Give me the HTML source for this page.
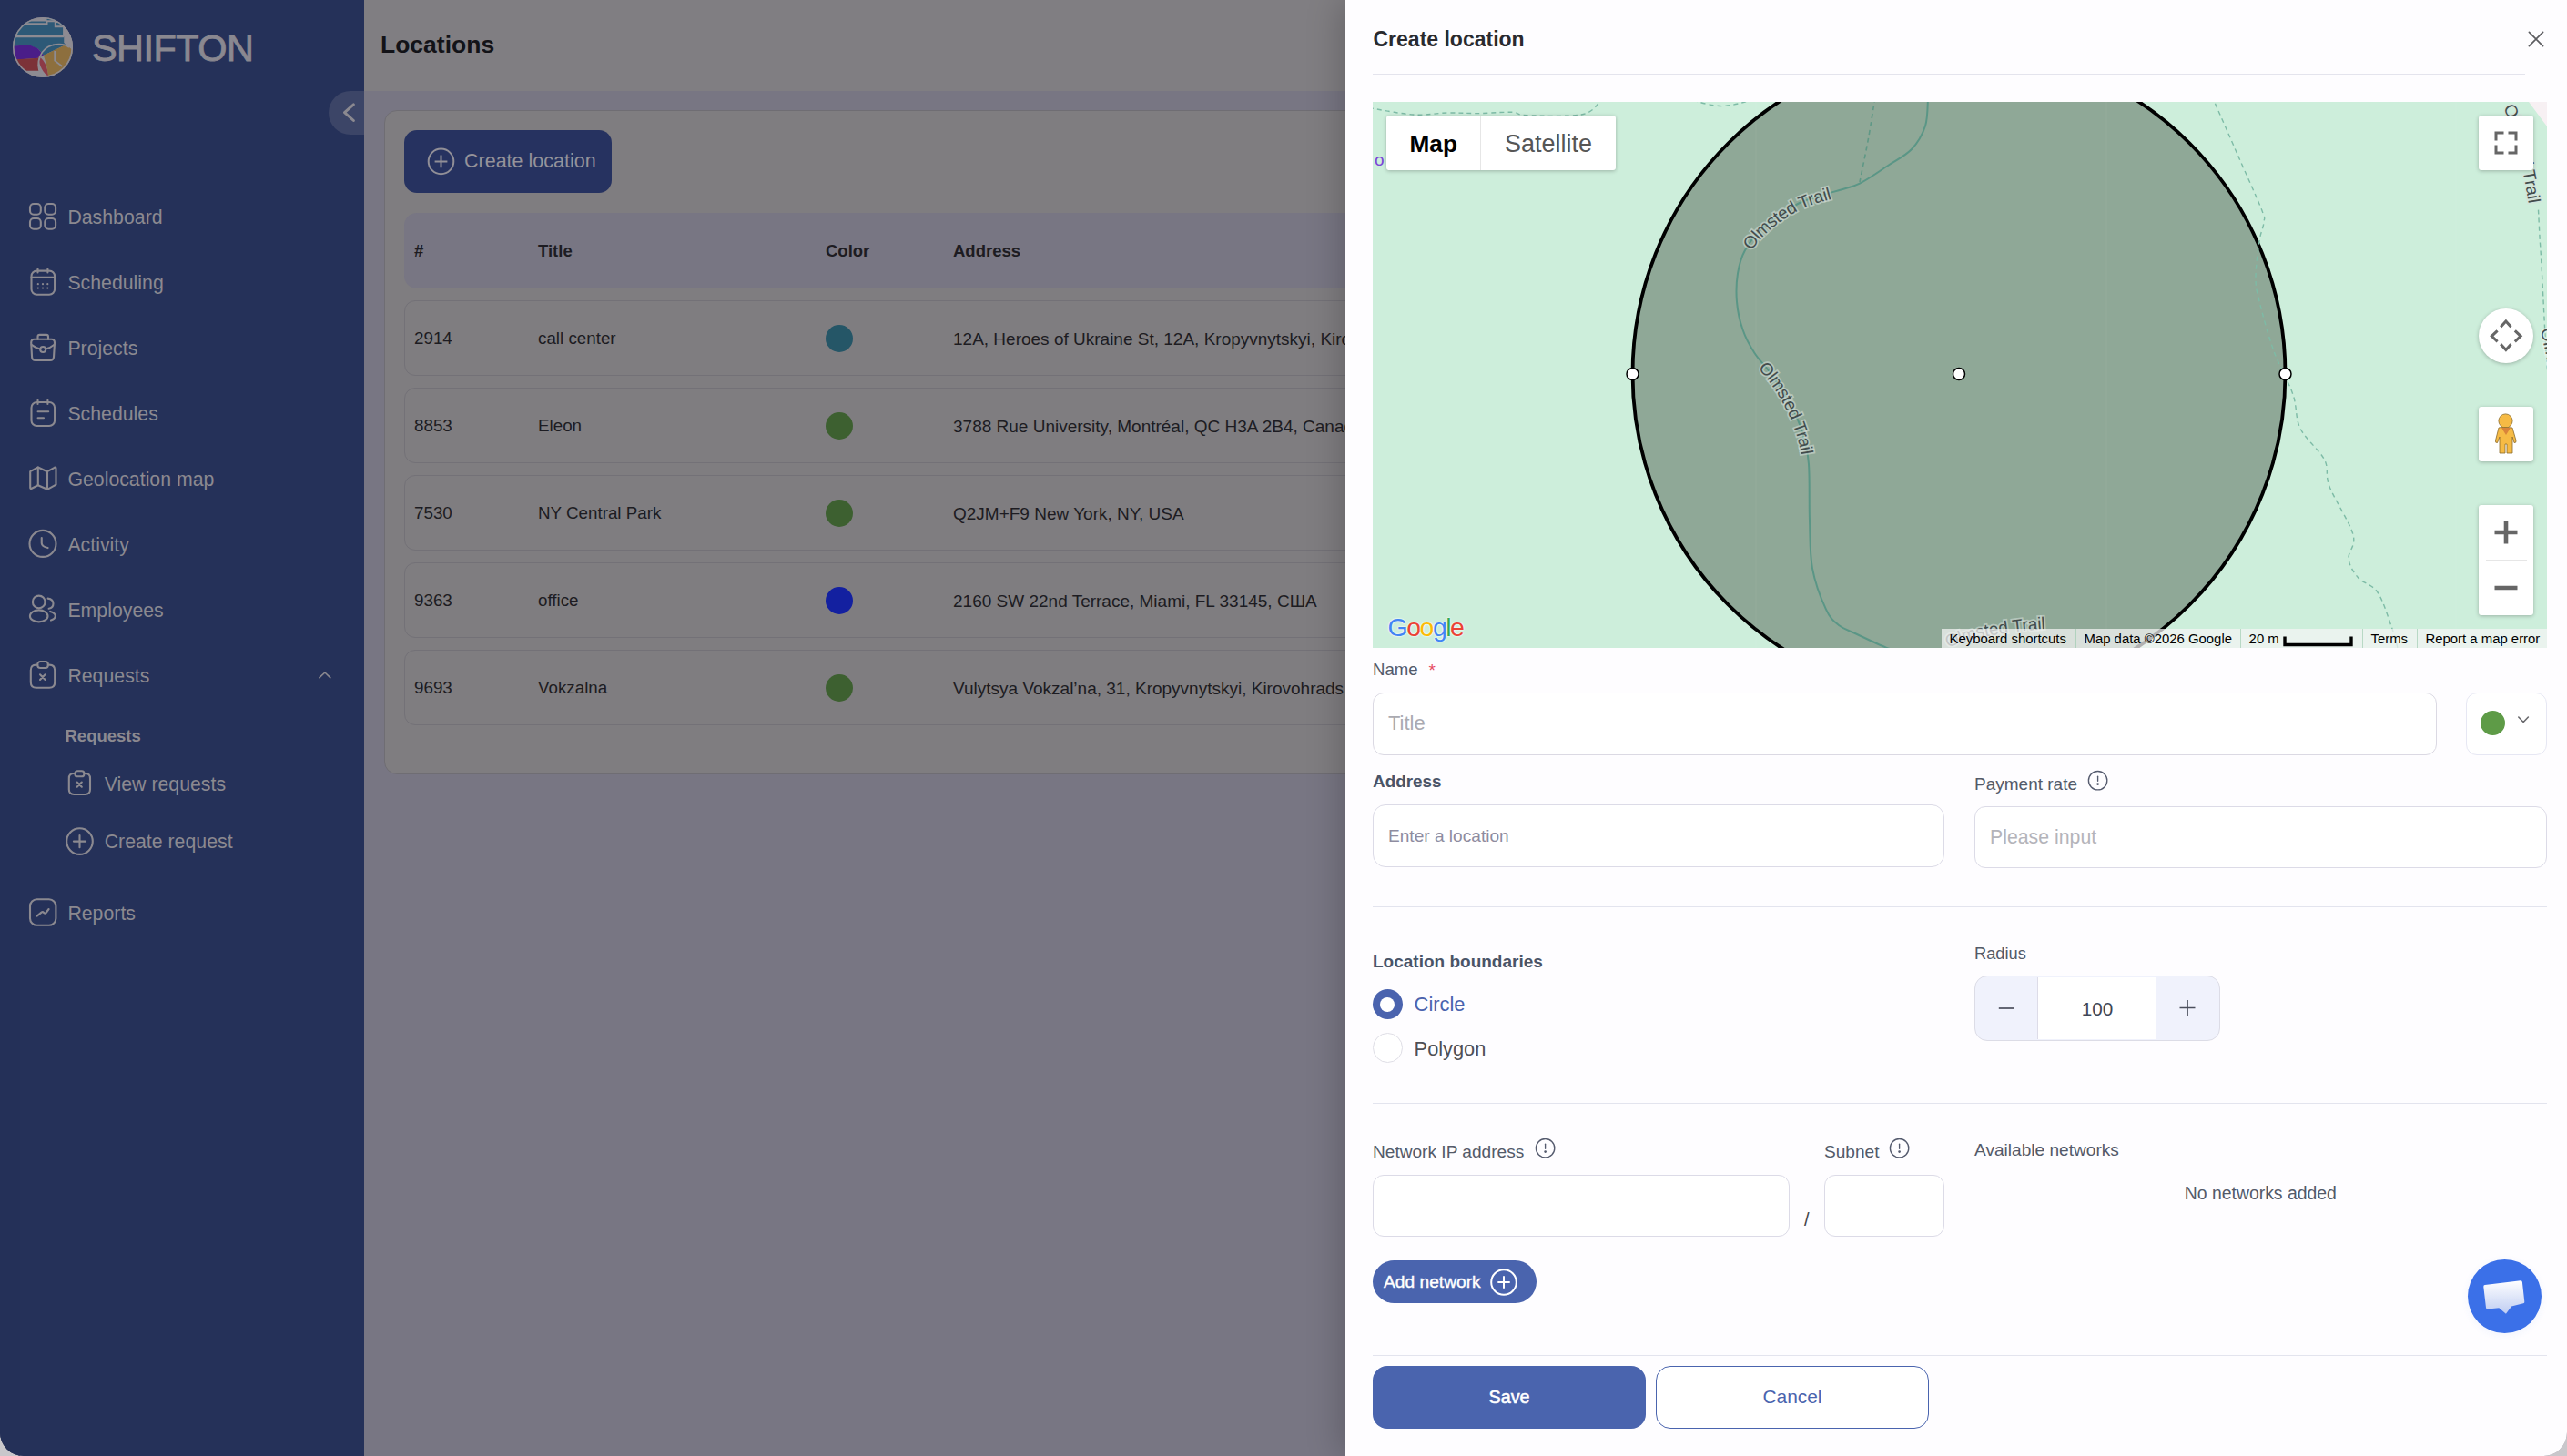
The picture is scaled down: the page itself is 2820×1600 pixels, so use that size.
<!DOCTYPE html>
<html><head><meta charset="utf-8">
<style>
html,body{margin:0;padding:0;width:2820px;height:1600px;overflow:hidden;background:#c9c7cb;}
*{box-sizing:border-box;}
body{font-family:"Liberation Sans",sans-serif;}
#app{position:absolute;left:0;top:0;width:2820px;height:1600px;overflow:hidden;border-radius:0 0 26px 26px;background:#787683;}
.a{position:absolute;}
.t{position:absolute;white-space:nowrap;line-height:1;}
svg{position:absolute;overflow:visible;}
/* sidebar */
#sb{left:0;top:0;width:400px;height:1600px;background:#253159;}
.sbt{color:#8b8990;font-size:21.3px;}
.ic{fill:none;stroke:#8b8990;stroke-width:2.1;stroke-linecap:round;stroke-linejoin:round;}
/* main */
#hdr{left:400px;top:0;width:1078px;height:100px;background:#807e82;}
.row{position:absolute;left:444px;width:1100px;height:83px;background:#7f7d80;border:1.5px solid #737177;border-radius:12px;}
.cell{position:absolute;color:#1d1c22;font-size:18.8px;line-height:1;white-space:nowrap;}
.dot{position:absolute;width:30px;height:30px;border-radius:50%;}
.inp{border:1.6px solid #dcdbe7;border-radius:12px;background:#fff;}
.info{fill:none;stroke:#555b6e;stroke-width:1.35;stroke-linecap:round;}
</style></head>
<body>
<div id="app">
 <!-- SIDEBAR -->
 <div id="sb" class="a">
  <div class="a" style="left:0;top:0;width:22px;height:1600px;background:#243058;"></div>
  <!-- logo -->
  <svg style="left:14px;top:19px" width="66" height="66" viewBox="0 0 66 66">
   <defs><clipPath id="lc"><circle cx="33" cy="33" r="33"/></clipPath></defs>
   <g clip-path="url(#lc)">
    <rect x="0" y="0" width="66" height="66" fill="#8d8b92"/>
    <path d="M0 4.5H37.5V0.5H47V6H56.5V28L58.5 30.1L33.9 41.8L28.1 34.8L15.2 30.1L0 32.4Z" fill="#2d5977"/>
    <path d="M9.9 9.8V7.2H37.5V4.3H46.8V10.2H56.1V20.3H1.5" fill="none" stroke="#8d8b92" stroke-width="2"/>
    <path d="M0.5 21.4H56.1" stroke="#8d8b92" stroke-width="1.8"/>
    <path d="M0 32.4C6 31 15.2 30.1 15.2 30.1C21 31 28.1 34.8 28.1 34.8L33.9 41.8L28.1 44.7C21 45.3 9.4 46.4 2.4 46.4L0 46.4Z" fill="#4a1d88"/>
    <path d="M0 46.4L28.1 44.7L29.2 58.7L14 58.7L0 52Z" fill="#7c3238"/>
    <path d="M28.1 42.9C33 45 38 52 39.2 64.6C34 62 29 54 28.1 42.9Z" fill="#8c3a46"/>
    <path d="M33.9 41.8L58.5 30.1L66 36V66H39.2C38 54 35 46 33.9 41.8Z" fill="#8d6f3e"/>
    <path d="M58.5 30.1L66 36V0H56.5V28Z" fill="#8d8b92"/>
    <path d="M30.5 62C25 50 30 34 44 30.5C52 28.8 58 30 62 33" fill="none" stroke="#8d8b92" stroke-width="1.8"/>
    <path d="M46.2 37.1V47.6L54.4 54" fill="none" stroke="#8d8b92" stroke-width="1.8"/>
   </g>
   <circle cx="33" cy="33" r="32.2" fill="none" stroke="#8d8b92" stroke-width="1.6"/>
  </svg>
  <div class="t" style="left:101px;top:32.6px;font-size:41.4px;color:#8a8890;letter-spacing:-0.5px;-webkit-text-stroke:0.9px #8a8890;">SHIFTON</div>
  <!-- menu -->
  <svg class="ic" style="left:32px;top:223px" width="30" height="30"><rect x="1" y="1" width="11.8" height="11.8" rx="4"/><rect x="17.3" y="1" width="11.8" height="11.8" rx="4"/><rect x="1" y="17" width="11.8" height="11.8" rx="4"/><rect x="17.3" y="17" width="11.8" height="11.8" rx="4"/></svg>
  <div class="t sbt" style="left:74.4px;top:228.8px">Dashboard</div>
  <svg class="ic" style="left:32px;top:295px" width="30" height="30"><rect x="2.5" y="2.6" width="25.6" height="26.2" rx="6"/><path d="M9.5 0.5V4.5M20.4 0.5V4.5M2.5 9.8H28"/><g fill="#8b8990" stroke="none"><circle cx="9.8" cy="17.2" r="1.1"/><circle cx="15" cy="17.2" r="1.1"/><circle cx="20.3" cy="17.2" r="1.1"/><circle cx="9.8" cy="21.6" r="1.1"/><circle cx="15" cy="21.6" r="1.1"/><circle cx="20.3" cy="21.6" r="1.1"/></g></svg>
  <div class="t sbt" style="left:74.4px;top:300.8px">Scheduling</div>
  <svg class="ic" style="left:32px;top:367px" width="30" height="30"><path d="M2.2 9.5Q2.2 5.8 5.8 5.8H24.5Q28 5.8 28 9.5L27 25.5Q26.7 29 23.2 29H6.8Q3.3 29 3.1 25.5Z"/><path d="M9.5 5.8V3Q9.5 0.9 11.6 0.9H19Q21 0.9 21 3V5.8"/><path d="M2.6 11.8Q7.5 15.5 12.2 16.6M18.2 16.6Q23 15.5 27.6 11.8"/><circle cx="15.2" cy="17" r="3"/></svg>
  <div class="t sbt" style="left:74.4px;top:372.8px">Projects</div>
  <svg class="ic" style="left:32px;top:439px" width="30" height="30"><rect x="2.5" y="3" width="25.6" height="26" rx="6"/><path d="M9.5 0.8V5M20.4 0.8V5M9.6 13.2H21.2M9.6 20.2H16"/></svg>
  <div class="t sbt" style="left:74.4px;top:444.8px">Schedules</div>
  <svg class="ic" style="left:32px;top:512px" width="30" height="30"><path d="M1.2 6.2L9.8 1.5L20 6.2L27.8 1.8Q29.5 1 29.5 3V20.6L20 25.8L9.8 21.2L2.8 24.8Q1.2 25.6 1.2 23.8Z"/><path d="M9.8 1.5V21.2M20 6.2V25.8"/></svg>
  <div class="t sbt" style="left:74.4px;top:516.8px">Geolocation map</div>
  <svg class="ic" style="left:32px;top:582px" width="30" height="30"><circle cx="15" cy="15.4" r="14.5"/><path d="M13.75 9V15Q14 18.6 20.6 20.1"/></svg>
  <div class="t sbt" style="left:74.4px;top:588.8px">Activity</div>
  <svg class="ic" style="left:32px;top:654px" width="30" height="32"><circle cx="10.7" cy="7.4" r="6.8"/><ellipse cx="10.7" cy="22.9" rx="9.8" ry="6.5"/><path d="M20.6 3.6Q26.5 4.5 26.5 9.3Q26.5 14 21.6 14.8M23.2 17.9Q28.8 19.6 28.8 22.8Q28.8 26 24 27.6"/></svg>
  <div class="t sbt" style="left:74.4px;top:660.8px">Employees</div>
  <svg class="ic" style="left:32px;top:726px" width="30" height="32"><path d="M9.2 4.6H7.8Q1.8 4.6 1.8 10.6V23.8Q1.8 29.8 7.8 29.8H22.2Q28.2 29.8 28.2 23.8V10.6Q28.2 4.6 22.2 4.6H20.8"/><rect x="9.3" y="1" width="11.5" height="7" rx="3"/><path d="M12 15.3L17.6 20.9M17.6 15.3L12 20.9"/></svg>
  <div class="t sbt" style="left:74.4px;top:732.8px">Requests</div>
  <svg style="left:348px;top:736px" width="18" height="12"><path d="M2.9 8.6L8.9 3L14.8 8.6" fill="none" stroke="#8b8990" stroke-width="1.6" stroke-linecap="round"/></svg>
  <div class="t" style="left:71.5px;top:800.3px;font-size:18.5px;font-weight:700;color:#8b8990">Requests</div>
  <svg class="ic" style="left:74px;top:846px" width="28" height="32" style="stroke-width:2"><path d="M8.4 4H7.2Q1.8 4 1.8 9.4V21.6Q1.8 27 7.2 27H19.6Q25 27 25 21.6V9.4Q25 4 19.6 4H18.4"/><rect x="8.4" y="1.3" width="10" height="6" rx="2.6"/><path d="M10.7 13.6L15.8 18.7M15.8 13.6L10.7 18.7"/></svg>
  <div class="t sbt" style="left:114.7px;top:851.8px">View requests</div>
  <svg class="ic" style="left:72px;top:909px" width="32" height="32"><circle cx="15.5" cy="15.6" r="14.3"/><path d="M15.5 9V22.2M8.9 15.6H22.1"/></svg>
  <div class="t sbt" style="left:114.7px;top:914.8px">Create request</div>
  <svg class="ic" style="left:32px;top:987px" width="30" height="32"><rect x="1" y="1.2" width="28.4" height="28.6" rx="7.5"/><path d="M8.6 19.6L13.8 15.4Q15 14.6 16.3 16.2Q17.5 17 18.6 16L21.6 12"/></svg>
  <div class="t sbt" style="left:74.4px;top:993.8px">Reports</div>
 </div>
 <!-- collapse button -->
 <div class="a" style="left:361px;top:100px;width:39px;height:48px;background:#3c4567;border-radius:24px 0 0 24px;"></div>
 <svg style="left:370px;top:108px" width="30" height="32"><path d="M18.4 6.9 L8.5 15.7 L18.4 24.5" fill="none" stroke="#8b8990" stroke-width="3" stroke-linecap="round" stroke-linejoin="round"/></svg>

 <!-- MAIN -->
 <div id="hdr" class="a"></div>
 <div class="t" style="left:418px;top:35.5px;font-size:26.5px;font-weight:700;color:#131318;">Locations</div>
 <div class="a" style="left:422px;top:121px;width:1300px;height:730px;background:#7f7d80;border:1.5px solid #6f6d73;border-radius:14px;"></div>
 <div class="a" style="left:444px;top:143px;width:228px;height:69px;background:#263260;border-radius:14px;"></div>
 <svg style="left:468px;top:161px" width="34" height="34"><circle cx="16.5" cy="16.4" r="13.8" fill="none" stroke="#918f97" stroke-width="2"/><path d="M16.5 9.5V23.3M9.6 16.4H23.4" stroke="#918f97" stroke-width="2"/></svg>
 <div class="t" style="left:510px;top:166.8px;font-size:21.5px;color:#95939a;">Create location</div>

 <div class="a" style="left:444px;top:234px;width:1100px;height:83px;background:#787683;border-radius:14px;"></div>
 <div class="cell" style="left:455px;top:267.3px;font-weight:700;font-size:18.5px;">#</div>
 <div class="cell" style="left:591px;top:267.3px;font-weight:700;font-size:18.5px;">Title</div>
 <div class="cell" style="left:907px;top:267.3px;font-weight:700;font-size:18.5px;">Color</div>
 <div class="cell" style="left:1047px;top:267.3px;font-weight:700;font-size:18.5px;">Address</div>

 <div class="row" style="top:330px"></div>
 <div class="row" style="top:426px"></div>
 <div class="row" style="top:522px"></div>
 <div class="row" style="top:618px"></div>
 <div class="row" style="top:714px"></div>

 <div class="cell" style="left:455px;top:363.1px">2914</div>
 <div class="cell" style="left:591px;top:363.1px">call center</div>
 <div class="dot" style="left:907px;top:357px;background:#255667"></div>
 <div class="cell" style="left:1047px;top:362.9px;font-size:19px">12A, Heroes of Ukraine St, 12A, Kropyvnytskyi, Kirovohrad Oblast</div>

 <div class="cell" style="left:455px;top:459.1px">8853</div>
 <div class="cell" style="left:591px;top:459.1px">Eleon</div>
 <div class="dot" style="left:907px;top:453px;background:#3d6030"></div>
 <div class="cell" style="left:1047px;top:458.9px;font-size:19px">3788 Rue University, Montréal, QC H3A 2B4, Canada</div>

 <div class="cell" style="left:455px;top:555.1px">7530</div>
 <div class="cell" style="left:591px;top:555.1px">NY Central Park</div>
 <div class="dot" style="left:907px;top:549px;background:#3d6030"></div>
 <div class="cell" style="left:1047px;top:554.9px;font-size:19px">Q2JM+F9 New York, NY, USA</div>

 <div class="cell" style="left:455px;top:651.1px">9363</div>
 <div class="cell" style="left:591px;top:651.1px">office</div>
 <div class="dot" style="left:907px;top:645px;background:#1320a0"></div>
 <div class="cell" style="left:1047px;top:650.9px;font-size:19px">2160 SW 22nd Terrace, Miami, FL 33145, США</div>

 <div class="cell" style="left:455px;top:747.1px">9693</div>
 <div class="cell" style="left:591px;top:747.1px">Vokzalna</div>
 <div class="dot" style="left:907px;top:741px;background:#3d6030"></div>
 <div class="cell" style="left:1047px;top:746.9px;font-size:19px">Vulytsya Vokzal’na, 31, Kropyvnytskyi, Kirovohrads</div>


 <!-- DRAWER -->
 <div id="drawer" class="a" style="left:1478px;top:0;width:1342px;height:1600px;background:#fefdff;box-shadow:-4px 0 36px rgba(0,0,0,0.22);"></div>
 <div class="t" style="left:1508.5px;top:32.2px;font-size:23px;font-weight:700;color:#2a2a2e;">Create location</div>
 <svg style="left:2776px;top:33px" width="20" height="20"><path d="M2.4 2.4L17.6 17.6M17.6 2.4L2.4 17.6" stroke="#5c5c60" stroke-width="1.7" stroke-linecap="round"/></svg>
 <div class="a" style="left:1508px;top:81px;width:1266px;height:1px;background:#e4e4ed;"></div>

 <!-- MAP -->
 <div class="a" style="left:1508px;top:112px;width:1290px;height:600px;overflow:hidden;background:#cdeedb;">
  <svg style="left:0;top:0" width="1290" height="600" viewBox="0 0 1290 600">
   <path d="M1270 0H1290V27Z" fill="#f7f0f3"/>
   <circle cx="644" cy="299" r="358.5" fill="#8fa897" stroke="#000" stroke-width="3.8"/>
   <path d="M421 -4V604M806 -4V604M1190 -4V604" stroke="rgba(255,255,255,0.06)" stroke-width="1"/>
   <g fill="none" stroke="#7dbba6" stroke-width="1.4" stroke-dasharray="5 4">
    <path d="M-4.0 6.5C4.1 7.8 30.5 13.1 44.8 14.0C59.1 14.9 70.1 12.2 82.0 12.0C93.9 11.8 104.2 12.7 116.0 12.6C127.8 12.5 144.2 10.9 153.0 11.3C161.8 11.6 156.3 14.3 169.0 14.7C181.7 15.2 215.7 16.3 229.0 14.0C242.3 11.7 245.2 3.7 249.0 0.7C252.8 -2.3 251.5 -3.2 252.0 -4.0"/>
    <path d="M354.0 -4.0C354.7 -3.3 353.1 -1.4 358.0 0.0C362.9 1.4 374.9 4.6 383.4 4.6C391.9 4.6 404.1 1.4 409.0 0.0C413.9 -1.4 412.3 -3.3 413.0 -4.0"/>
    <path d="M923.0 -4.0C923.3 -3.2 920.5 -9.6 925.0 0.7C929.5 11.0 941.4 38.0 950.0 57.7C958.6 77.3 971.8 106.2 976.6 118.6C981.4 131.0 979.4 126.3 979.0 132.0C978.6 137.7 975.5 142.8 974.0 153.0C972.5 163.2 970.0 182.0 970.0 193.0C970.0 204.0 970.7 205.5 974.0 219.0C977.3 232.5 983.8 256.9 990.0 274.0C996.2 291.1 1006.2 307.6 1011.0 321.7C1015.8 335.8 1013.2 346.9 1019.0 358.8C1024.8 370.7 1040.3 382.7 1045.6 393.3C1050.9 403.9 1045.8 408.8 1051.0 422.5C1056.2 436.2 1073.5 462.2 1077.0 475.5C1080.5 488.8 1071.0 494.1 1072.0 502.0C1073.0 509.9 1077.4 516.8 1082.7 523.0C1088.0 529.2 1097.8 529.7 1104.0 539.0C1110.2 548.3 1116.2 568.2 1120.0 579.0C1123.8 589.8 1125.8 599.8 1127.0 604.0"/>
    <path d="M1280.5 118.6C1280.8 123.5 1281.4 137.8 1282.0 148.0C1282.6 158.2 1282.8 158.6 1284.0 179.6C1285.2 200.6 1287.7 252.6 1289.0 274.0C1290.3 295.4 1291.5 302.3 1292.0 308.0"/>
   </g>
   <g fill="none" stroke="#5f9886" stroke-width="1.6" stroke-dasharray="5 4">
    <path d="M552.0 -4.0C551.8 -3.2 552.3 -7.1 551.0 0.7C549.7 8.5 546.7 28.5 544.0 43.0C541.3 57.5 536.5 80.5 535.0 88.0"/>
   </g>
   <path fill="none" stroke="#5a9686" stroke-width="2" d="M610.0 -4.0C609.5 1.1 610.0 17.2 607.0 26.5C604.0 35.8 598.8 44.8 592.0 52.0C585.2 59.2 575.5 63.7 566.0 70.0C556.5 76.3 544.8 84.8 535.0 89.6C525.2 94.4 518.2 94.9 507.0 98.6C495.8 102.2 480.8 105.1 468.0 111.5C455.2 117.9 439.8 128.4 430.0 137.0C420.2 145.6 413.8 154.4 409.0 163.0C404.2 171.6 402.5 179.3 401.0 188.7C399.5 198.1 399.1 209.3 400.0 219.6C400.9 229.9 403.3 241.1 406.6 250.5C409.8 259.9 414.4 268.1 419.5 276.0C424.6 283.9 430.8 289.3 437.0 298.0C443.2 306.7 451.2 317.2 457.0 328.0C462.8 338.8 468.3 351.3 472.0 363.0C475.7 374.7 477.7 381.9 479.0 398.0C480.3 414.1 479.3 440.5 480.0 459.6C480.7 478.7 480.0 496.2 483.0 512.6C486.0 529.0 493.2 547.3 498.0 557.7C502.8 568.1 506.3 570.5 512.0 575.0C517.7 579.5 523.3 580.9 532.0 585.0C540.7 589.1 555.7 596.4 564.0 599.6C572.3 602.8 579.0 603.3 582.0 604.0"/>
   <defs>
    <path id="lp1" d="M401 188.7C403 175 405 170 409 163C414 154 420 146 430 137C442 127 454 118 468 111.5C481 105.5 495 102 507 98.6C518 95.5 525 94 535 89.6C546 84.5 556 77 566 70"/>
    <path id="lp2" d="M419.5 276C425 284 430 289 437 298C444 307 451 317 457 328C463 339 468 351 472 363C476 375 478 386 479 398C480 418 480 440 480 459.6"/>
    <path id="lp3" d="M560 640C590 610 625 592 660 583C695 575 730 572 770 571"/>
    <path id="lp4" d="M1230 -30C1240 -15 1250 5 1258 25C1266 50 1272 80 1278 118"/>
   </defs>
   <g font-family="Liberation Sans" font-size="19" fill="#434c4c" stroke="rgba(215,224,220,0.55)" stroke-width="3.5" paint-order="stroke" dominant-baseline="central">
    <text><textPath href="#lp1" startOffset="31">Olmsted Trail</textPath></text>
    <text><textPath href="#lp2" startOffset="15">Olmsted Trail</textPath></text>
    <text><textPath href="#lp3" startOffset="84">Olmsted Trail</textPath></text>
    <text><textPath href="#lp4" startOffset="38">Olmsted Trail</textPath></text>
   </g>
   <text x="2" y="70" font-family="Liberation Sans" font-size="19" fill="#7b46d8">o</text>
   <text transform="translate(1283 250) rotate(78)" font-family="Liberation Sans" font-size="19" fill="#434c4c" stroke="rgba(236,244,240,0.6)" stroke-width="3.5" paint-order="stroke">Olmsted</text>
   <g fill="#fff" stroke="#000" stroke-width="1.5">
    <circle cx="285.5" cy="299" r="6.5"/><circle cx="644" cy="299" r="6.5"/><circle cx="1002.5" cy="299" r="6.5"/>
   </g>
  </svg>
  <!-- map type -->
  <div class="a" style="left:15px;top:15px;width:252px;height:60px;background:#fff;border-radius:3px;box-shadow:0 1px 4px rgba(0,0,0,0.25);"></div>
  <div class="a" style="left:118px;top:15px;width:1px;height:60px;background:#e6e6e6;"></div>
  <div class="t" style="left:40.5px;top:32.5px;font-size:26.2px;font-weight:700;color:#000;">Map</div>
  <div class="t" style="left:145px;top:32.5px;font-size:27px;color:#565656;">Satellite</div>
  <!-- fullscreen -->
  <div class="a" style="left:1215px;top:15px;width:60px;height:60px;background:#fff;border-radius:3px;box-shadow:0 1px 4px rgba(0,0,0,0.25);"></div>
  <svg style="left:1215px;top:15px" width="60" height="60"><path d="M19 27.5V19H27.5M32.5 19H41V27.5M41 32.5V41H32.5M27.5 41H19V32.5" fill="none" stroke="#666" stroke-width="3"/></svg>
  <!-- rotate -->
  <div class="a" style="left:1215px;top:227px;width:60px;height:60px;background:#fff;border-radius:50%;box-shadow:0 1px 4px rgba(0,0,0,0.25);"></div>
  <svg style="left:1215px;top:227px" width="60" height="60"><path d="M24.2 20.3L29.9 14L35.5 20.3M24.2 39.3L29.9 45.6L35.5 39.3M20.6 24.3L14.3 30.3L20.6 36.3M39.8 24.3L46.1 30.3L39.8 36.3" fill="none" stroke="#666" stroke-width="3"/></svg>
  <!-- pegman -->
  <div class="a" style="left:1215px;top:335px;width:60px;height:60px;background:#fff;border-radius:3px;box-shadow:0 1px 4px rgba(0,0,0,0.25);"></div>
  <svg style="left:1215px;top:335px" width="60" height="60"><g fill="#f6bb45" stroke="#8a6a2a" stroke-width="0.8"><circle cx="29.5" cy="15.5" r="7.6"/><path d="M22 23Q25 22 37 23L41 37Q41.5 40 39 39.5L37 33V51H31V41H29V51H23V33L20.5 39.5Q18 40 18.5 37Z"/></g><path d="M25 23H35L30 31Z" fill="#d9843a"/></svg>
  <!-- zoom -->
  <div class="a" style="left:1215px;top:443px;width:60px;height:121px;background:#fff;border-radius:3px;box-shadow:0 1px 4px rgba(0,0,0,0.25);"></div>
  <div class="a" style="left:1223px;top:503px;width:45px;height:1px;background:#e6e6e6;"></div>
  <svg style="left:1215px;top:443px" width="60" height="121"><path d="M17.5 30H42.5M30 17.5V42.5M17.5 91H42.5" stroke="#666" stroke-width="4.6"/></svg>
  <!-- google logo -->
  <div class="t" style="left:16.5px;top:563px;font-size:28.5px;letter-spacing:-1.5px;text-shadow:0 0 2px #fff,0 0 2px #fff;"><span style="color:#4285f4">G</span><span style="color:#ea4335">o</span><span style="color:#fbbc05">o</span><span style="color:#4285f4">g</span><span style="color:#34a853">l</span><span style="color:#ea4335">e</span></div>
  <!-- attribution -->
  <div class="a" style="left:625px;top:579px;width:665px;height:21px;background:rgba(245,245,245,0.72);"></div>
  <div class="a" style="left:772px;top:579px;width:1px;height:21px;background:rgba(150,200,170,0.6);"></div>
  <div class="a" style="left:953px;top:579px;width:1px;height:21px;background:rgba(150,200,170,0.6);"></div>
  <div class="a" style="left:1087px;top:579px;width:1px;height:21px;background:rgba(150,200,170,0.6);"></div>
  <div class="a" style="left:1147px;top:579px;width:1px;height:21px;background:rgba(150,200,170,0.6);"></div>
  <div class="t" style="left:633.6px;top:583.3px;font-size:14.9px;color:#000;">Keyboard shortcuts</div>
  <div class="t" style="left:781.5px;top:583.3px;font-size:14.9px;color:#000;">Map data ©2026 Google</div>
  <div class="t" style="left:962.6px;top:583.3px;font-size:14.9px;color:#000;">20 m</div>
  <svg style="left:1000px;top:586px" width="80" height="14"><path d="M2 1.5V10.5H75V1.5" fill="none" stroke="#000" stroke-width="3.4"/></svg>
  <div class="t" style="left:1096.5px;top:583.3px;font-size:14.9px;color:#000;">Terms</div>
  <div class="t" style="left:1156.5px;top:583.3px;font-size:14.9px;color:#000;">Report a map error</div>
 </div>

 <!-- FORM -->
 <div class="t lbl" style="left:1508px;top:727.3px;font-size:18.6px;color:#535a69;">Name</div>
 <div class="t" style="left:1569.5px;top:727px;font-size:19px;color:#e64a5f;">*</div>
 <div class="a inp" style="left:1508px;top:760.5px;width:1169px;height:69.5px;border-color:#dbd9e3;border-width:1.8px;"></div>
 <div class="t" style="left:1525px;top:784.3px;font-size:22px;color:#aaaab1;">Title</div>
 <div class="a inp" style="left:2709px;top:760.5px;width:89px;height:69.5px;border-color:#e6e7f3;"></div>
 <div class="a" style="left:2725px;top:780.5px;width:27px;height:27px;border-radius:50%;background:#5e9b47;"></div>
 <svg style="left:2762px;top:783px" width="20" height="14"><path d="M4.8 5L10.1 10.5L15.4 5" fill="none" stroke="#6a6a6e" stroke-width="1.6" stroke-linecap="round" stroke-linejoin="round"/></svg>

 <div class="t" style="left:1508px;top:849.7px;font-size:18.9px;font-weight:700;color:#4a5467;">Address</div>
 <div class="a inp" style="left:1508px;top:884px;width:628px;height:68.5px;border-radius:14px;"></div>
 <div class="t" style="left:1525px;top:909.1px;font-size:19.1px;color:#8e8ca0;">Enter a location</div>

 <div class="t" style="left:2169px;top:851.9px;font-size:19px;color:#535a69;">Payment rate</div>
 <svg class="info" style="left:2292px;top:845px" width="26" height="26"><circle cx="12.6" cy="12.7" r="10.2"/><path d="M12.6 8.2V13.2"/><circle cx="12.6" cy="16.6" r="0.7" fill="#555b6e"/></svg>
 <div class="a inp" style="left:2169px;top:886px;width:629px;height:68px;"></div>
 <div class="t" style="left:2186px;top:910px;font-size:21.3px;color:#b4b4ba;">Please input</div>

 <div class="a" style="left:1508px;top:996px;width:1290px;height:1px;background:#e3e4ee;"></div>

 <div class="t" style="left:1508px;top:1046.9px;font-size:19px;font-weight:700;color:#4a5467;">Location boundaries</div>
 <div class="a" style="left:1508px;top:1087.1px;width:33px;height:33px;border-radius:50%;background:#4a63ae;"></div>
 <div class="a" style="left:1516.4px;top:1095.6px;width:16px;height:16px;border-radius:50%;background:#fff;"></div>
 <div class="t" style="left:1553.6px;top:1092.5px;font-size:21.9px;color:#4a63ae;">Circle</div>
 <div class="a" style="left:1508px;top:1134.8px;width:33px;height:33px;border-radius:50%;border:1.5px solid #dfdee6;background:#fff;"></div>
 <div class="t" style="left:1553.6px;top:1142.2px;font-size:21.8px;color:#4f4f55;">Polygon</div>

 <div class="t" style="left:2169px;top:1039px;font-size:18.3px;color:#535a69;">Radius</div>
 <div class="a inp" style="left:2169px;top:1072px;width:270px;height:71.5px;border-radius:14px;background:#f0f2fc;overflow:hidden;border-color:#dcdce6;"></div>
 <div class="a" style="left:2238px;top:1073.6px;width:131px;height:68.3px;background:#fff;border-left:1.4px solid #dddce8;border-right:1.4px solid #dddce8;"></div>
 <svg style="left:2190px;top:1094px" width="30" height="30"><path d="M5.8 14H22.8" stroke="#4b4f5c" stroke-width="1.7"/></svg>
 <svg style="left:2389px;top:1094px" width="30" height="30"><path d="M5.5 13.5H22.5M14 5V22" stroke="#4b4f5c" stroke-width="1.7"/></svg>
 <div class="t" style="left:2269px;top:1099.4px;width:70px;text-align:center;font-size:20.7px;color:#3e4656;">100</div>

 <div class="a" style="left:1508px;top:1212px;width:1290px;height:1px;background:#e3e4ee;"></div>

 <div class="t" style="left:1508px;top:1255.8px;font-size:19.1px;color:#535a69;">Network IP address</div>
 <svg class="info" style="left:1685.4px;top:1248.7px" width="26" height="26"><circle cx="12.6" cy="12.7" r="10.2"/><path d="M12.6 8.2V13.2"/><circle cx="12.6" cy="16.6" r="0.7" fill="#555b6e"/></svg>
 <div class="t" style="left:2004px;top:1255.8px;font-size:19.1px;color:#535a69;">Subnet</div>
 <svg class="info" style="left:2074.4px;top:1248.7px" width="26" height="26"><circle cx="12.6" cy="12.7" r="10.2"/><path d="M12.6 8.2V13.2"/><circle cx="12.6" cy="16.6" r="0.7" fill="#555b6e"/></svg>
 <div class="t" style="left:2169px;top:1254.4px;font-size:19.1px;color:#535a69;">Available networks</div>
 <div class="t" style="left:2399.8px;top:1301.6px;font-size:19.4px;color:#535a69;">No networks added</div>
 <div class="a inp" style="left:1508px;top:1290.5px;width:457.5px;height:68px;"></div>
 <div class="t" style="left:1982px;top:1330px;font-size:20px;color:#45454a;">/</div>
 <div class="a inp" style="left:2004px;top:1290.5px;width:132px;height:68px;"></div>

 <div class="a" style="left:1508px;top:1385.2px;width:179.5px;height:46.5px;border-radius:24px;background:#4a64ae;"></div>
 <div class="t" style="left:1520px;top:1398.9px;font-size:19.2px;color:#fff;-webkit-text-stroke:0.4px #fff;">Add network</div>
 <svg style="left:1636px;top:1393px" width="32" height="32"><circle cx="16" cy="16" r="13.8" fill="none" stroke="#fff" stroke-width="2"/><path d="M16 9.3V22.7M9.3 16H22.7" stroke="#fff" stroke-width="2"/></svg>

 <!-- chat -->
 <div class="a" style="left:2711px;top:1384px;width:81px;height:81px;border-radius:50%;background:#3b70e8;box-shadow:0 2px 8px rgba(59,112,232,0.07);"></div>
 <svg style="left:2711px;top:1384px" width="81" height="81"><defs><linearGradient id="cg" x1="0" y1="0" x2="0" y2="1"><stop offset="0" stop-color="#ffffff"/><stop offset="1" stop-color="#bfcdf2"/></linearGradient></defs><path d="M18.8 28L58 23.3Q59.7 23.1 59.9 25L62.3 46.5Q62.5 48 61 48.2L48.1 51.4L41.9 59.7L34.3 53.2L21.8 54.5Q20.2 54.7 20 53L17.3 30Q17.2 28.2 18.8 28Z" fill="url(#cg)"/></svg>

 <div class="a" style="left:1508px;top:1488.5px;width:1290px;height:1px;background:#e3e4ee;"></div>
 <div class="a" style="left:1508px;top:1501.3px;width:300px;height:68.5px;border-radius:16px;background:#4a64ae;"></div>
 <div class="t" style="left:1508px;top:1525.6px;width:300px;text-align:center;font-size:19.7px;color:#fff;-webkit-text-stroke:0.55px #fff;">Save</div>
 <div class="a" style="left:1819px;top:1501.3px;width:300px;height:68.5px;border-radius:16px;border:1.6px solid #4a64ae;background:#fff;"></div>
 <div class="t" style="left:1819px;top:1524.6px;width:300px;text-align:center;font-size:20.9px;color:#4a64ae;">Cancel</div>
</div>
</body></html>
